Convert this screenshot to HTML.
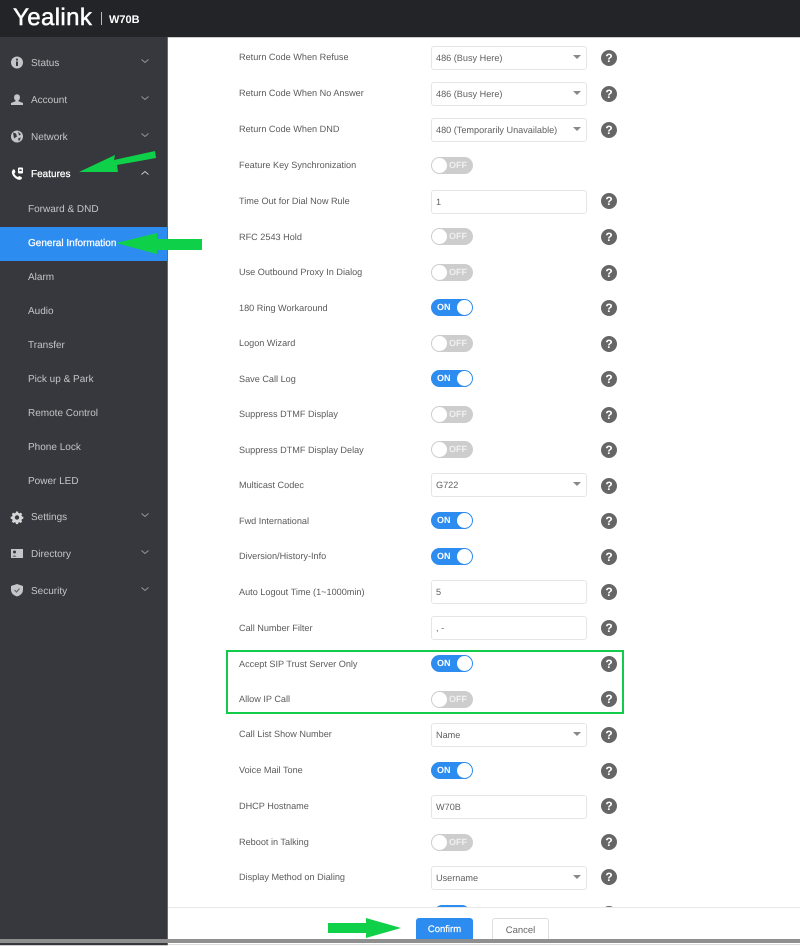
<!DOCTYPE html>
<html><head><meta charset="utf-8"><style>
html,body{margin:0;padding:0;background:#fff}
body{width:800px;height:946px;position:relative;overflow:hidden;font-family:"Liberation Sans",sans-serif;text-rendering:geometricPrecision}
.a{position:absolute}
#hdr{left:0;top:0;width:800px;height:37px;background:#232427}
#side{left:0;top:37px;width:167px;height:909px;background:#37383d;border-right:1px solid #6a6a6a}
.m,.s,.l,.f,.t,.h,.b{filter:blur(.35px)}
.m{position:absolute;left:31px;margin-top:1px;font-size:10px;line-height:14px;color:#c3c5c8}
.s{position:absolute;left:28px;margin-top:1px;font-size:10px;line-height:14px;color:#c3c5c8}
.w{color:#fff;-webkit-text-stroke:.25px #fff}
.l{position:absolute;left:239px;font-size:9.15px;line-height:12px;color:#5a5a5a;white-space:nowrap}
.f{position:absolute;left:431px;width:154px;height:22px;border:1px solid #e3e5e8;border-radius:3px;background:#fff;font-size:9.15px;line-height:22px;color:#5f5f5f;text-indent:4px;white-space:nowrap}
.f.d:after{content:"";position:absolute;right:5px;top:8px;border-left:4px solid transparent;border-right:4px solid transparent;border-top:4px solid #888}
.t{position:absolute;left:431px;width:42px;height:17px;border-radius:9px;font-size:9px;line-height:17px;font-weight:bold;color:#fff}
.on{background:#2d8cf0;text-indent:6px}
.off{background:#cdcdcd;text-indent:18px;color:#f0f0f0}
.t i{position:absolute;top:1px;width:15px;height:15px;border-radius:50%;background:#fff}
.on i{left:26px}.off i{left:1px}
.h{position:absolute;left:601px;width:16px;height:16px;border-radius:50%;background:#666;color:#fff;font-size:12px;font-weight:bold;line-height:16px;text-align:center}
</style></head><body>
<div class="a" id="hdr"></div>
<div class="a" style="left:13px;top:4px;font-size:24px;line-height:28px;letter-spacing:.4px;color:#fff;-webkit-text-stroke:.5px #fff;filter:blur(.3px)">Yealink</div>
<div class="a" style="left:101px;top:12px;width:1px;height:13px;background:#bbb"></div>
<div class="a" style="left:109px;top:14px;font-size:11px;line-height:13px;font-weight:bold;color:#fff">W70B</div>
<div class="a" style="left:168px;top:37px;width:632px;height:1px;background:#ccc"></div>
<div class="a" id="side"></div>
<div class="a" style="left:0;top:226.5px;width:167px;height:34px;background:#2d8cf0"></div>

<svg class="a" style="left:0;top:0;filter:blur(.3px)" width="168" height="610" viewBox="0 0 168 610">
<circle cx="17" cy="62.500" r="6" fill="#c3c5c8"/><rect x="16" y="61.500" width="2" height="4.500" fill="#37383d"/><rect x="16" y="58.700" width="2" height="1.800" fill="#37383d"/>
<ellipse cx="17" cy="97.500" rx="3" ry="3.300" fill="#c3c5c8"/><path d="M15.500 100h3v1.200l4.500 1.800v2H11v-2l4.500-1.800z" fill="#c3c5c8"/>
<circle cx="17" cy="136.500" r="6" fill="#c3c5c8"/><path d="M13 132.500l3 1 1 3-3 2zM18 131.500l3 3-2 1zM18 138.500l3-1-2 4z" fill="#37383d"/>
<path d="M12 170.500q1-1.500 2.500-1l1 2.500-1.200 1.500q1 2.500 3.500 3.500l1.500-1 2.500 1.200q.5 1.500-1 2.300-2 1-5-1-4-3-4-6.500q0-1 1.200-1.500z" fill="#fff"/><rect x="18" y="167.500" width="5" height="6" rx="1" fill="#fff"/><rect x="19.300" y="169.500" width="2.400" height="1.500" fill="#37383d"/>
<path d="M16 511.500h2l.4 1.500 1 .4 1.300-.8 1.500 1.500-.8 1.300.4 1 1.500.4v2l-1.500.4-.4 1 .8 1.300-1.500 1.500-1.300-.8-1 .4-.4 1.500h-2l-.4-1.500-1-.4-1.300.8-1.500-1.500.8-1.300-.4-1-1.500-.4v-2l1.500-.4.4-1-.8-1.300 1.500-1.500 1.300.8 1-.4z" fill="#d5d6d8"/><circle cx="17" cy="517.500" r="2.200" fill="#37383d"/>
<rect x="11" y="549" width="12" height="9" fill="#c3c5c8"/><circle cx="14.500" cy="552" r="1.500" fill="#37383d"/><path d="M12.500 556.500q2-2 4 0z" fill="#37383d"/>
<path d="M17 584l6 2v4q0 4.500-6 6.500q-6-2-6-6.500v-4z" fill="#c3c5c8"/><path d="M14.500 590l2 2 3-3.500" stroke="#666" stroke-width="1.200" fill="none"/>
<g fill="none" stroke="#94969a" stroke-width="1">
<path d="M141.500 59.500l3.500 3 3.500-3M141.500 96.500l3.500 3 3.500-3M141.500 133.500l3.500 3 3.500-3M141.500 513.500l3.500 3 3.500-3M141.500 550.500l3.500 3 3.500-3M141.500 587.500l3.500 3 3.500-3"/>
<path stroke="#c8c9cc" d="M141.500 174.500l3.500-3 3.500 3"/></g>
</svg>

<div class="m" style="top:56px">Status</div>
<div class="m" style="top:93px">Account</div>
<div class="m" style="top:130px">Network</div>
<div class="m w" style="top:167px">Features</div>
<div class="s" style="top:202px">Forward &amp; DND</div>
<div class="s w" style="top:236px">General Information</div>
<div class="s" style="top:270px">Alarm</div>
<div class="s" style="top:304px">Audio</div>
<div class="s" style="top:338px">Transfer</div>
<div class="s" style="top:372px">Pick up &amp; Park</div>
<div class="s" style="top:406px">Remote Control</div>
<div class="s" style="top:440px">Phone Lock</div>
<div class="s" style="top:474px">Power LED</div>
<div class="m" style="top:510px">Settings</div>
<div class="m" style="top:547px">Directory</div>
<div class="m" style="top:584px">Security</div>

<div class="l" style="top:51px">Return Code When Refuse</div><div class="f d" style="top:46px">486 (Busy Here)</div><div class="h" style="top:50px">?</div>
<div class="l" style="top:87px">Return Code When No Answer</div><div class="f d" style="top:82px">486 (Busy Here)</div><div class="h" style="top:86px">?</div>
<div class="l" style="top:123px">Return Code When DND</div><div class="f d" style="top:118px">480 (Temporarily Unavailable)</div><div class="h" style="top:122px">?</div>
<div class="l" style="top:159px">Feature Key Synchronization</div><div class="t off" style="top:157px">OFF<i></i></div>
<div class="l" style="top:195px">Time Out for Dial Now Rule</div><div class="f" style="top:190px">1</div><div class="h" style="top:193px">?</div>
<div class="l" style="top:231px">RFC 2543 Hold</div><div class="t off" style="top:228px">OFF<i></i></div><div class="h" style="top:229px">?</div>
<div class="l" style="top:266px">Use Outbound Proxy In Dialog</div><div class="t off" style="top:264px">OFF<i></i></div><div class="h" style="top:265px">?</div>
<div class="l" style="top:302px">180 Ring Workaround</div><div class="t on" style="top:299px">ON<i></i></div><div class="h" style="top:300px">?</div>
<div class="l" style="top:337px">Logon Wizard</div><div class="t off" style="top:335px">OFF<i></i></div><div class="h" style="top:336px">?</div>
<div class="l" style="top:373px">Save Call Log</div><div class="t on" style="top:370px">ON<i></i></div><div class="h" style="top:371px">?</div>
<div class="l" style="top:408px">Suppress DTMF Display</div><div class="t off" style="top:406px">OFF<i></i></div><div class="h" style="top:407px">?</div>
<div class="l" style="top:444px">Suppress DTMF Display Delay</div><div class="t off" style="top:441px">OFF<i></i></div><div class="h" style="top:442px">?</div>
<div class="l" style="top:479px">Multicast Codec</div><div class="f d" style="top:473px">G722</div><div class="h" style="top:478px">?</div>
<div class="l" style="top:515px">Fwd International</div><div class="t on" style="top:512px">ON<i></i></div><div class="h" style="top:513px">?</div>
<div class="l" style="top:550px">Diversion/History-Info</div><div class="t on" style="top:548px">ON<i></i></div><div class="h" style="top:549px">?</div>
<div class="l" style="top:586px">Auto Logout Time (1~1000min)</div><div class="f" style="top:580px">5</div><div class="h" style="top:584px">?</div>
<div class="l" style="top:622px">Call Number Filter</div><div class="f" style="top:616px">, -</div><div class="h" style="top:620px">?</div>
<div class="l" style="top:658px">Accept SIP Trust Server Only</div><div class="t on" style="top:655px">ON<i></i></div><div class="h" style="top:656px">?</div>
<div class="l" style="top:693px">Allow IP Call</div><div class="t off" style="top:691px">OFF<i></i></div><div class="h" style="top:691px">?</div>
<div class="l" style="top:728px">Call List Show Number</div><div class="f d" style="top:723px">Name</div><div class="h" style="top:727px">?</div>
<div class="l" style="top:764px">Voice Mail Tone</div><div class="t on" style="top:762px">ON<i></i></div><div class="h" style="top:763px">?</div>
<div class="l" style="top:800px">DHCP Hostname</div><div class="f" style="top:795px">W70B</div><div class="h" style="top:798px">?</div>
<div class="l" style="top:836px">Reboot in Talking</div><div class="t off" style="top:834px">OFF<i></i></div><div class="h" style="top:834px">?</div>
<div class="l" style="top:871px">Display Method on Dialing</div><div class="f d" style="top:866px">Username</div><div class="h" style="top:869px">?</div>
<div class="a" style="left:434px;top:905px;width:36px;height:8px;border-radius:8px 8px 0 0;background:#2d8cf0"></div>
<div class="a" style="left:601px;top:906px;width:16px;height:8px;border-radius:8px 8px 0 0;background:#666"></div>

<div class="a" style="left:226px;top:650px;width:394px;height:60px;border:2px solid #11cc4a"></div>

<div class="a" style="left:168px;top:907px;width:632px;height:32px;background:#fff;border-top:1px solid #e8e8e8;box-sizing:border-box"></div>
<div class="a b" style="left:416px;top:918px;width:57px;height:24px;background:#2d8cf0;border-radius:3px 3px 0 0;color:#fff;font-size:9.5px;line-height:24px;text-align:center;-webkit-text-stroke:.2px #fff">Confirm</div>
<div class="a b" style="left:492px;top:918px;width:55px;height:24px;border:1px solid #dcdee2;border-bottom:0;border-radius:3px 3px 0 0;color:#666;font-size:9.5px;line-height:23px;text-align:center;background:#fff">Cancel</div>
<div class="a" style="left:0;top:939px;width:800px;height:4px;background:#8f8f8f"></div>
<div class="a" style="left:168px;top:944px;width:632px;height:1px;background:#ddd"></div>
<div class="a" style="left:0;top:945px;width:168px;height:1px;background:#ccc"></div>

<svg class="a" style="left:0;top:0" width="800" height="946" viewBox="0 0 800 946">
<g fill="#0fd049">
<polygon points="79,172 115,155 114,160 155,151 156,158 117,165 118,172"/>
<polygon points="116,243 157,233 157,239 202,239 202,250 157,250 157,254"/>
<polygon points="328,923 366,923 366,918 401,928 366,938 366,933 328,933"/>
</g></svg>
</body></html>
